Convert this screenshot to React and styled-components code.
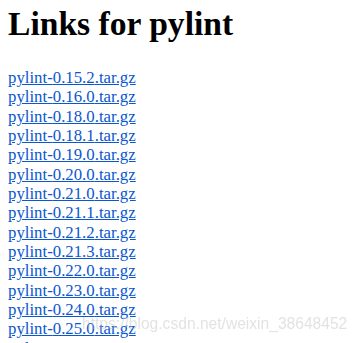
import React from 'react'
import styled, { createGlobalStyle } from 'styled-components'

const GlobalStyle = createGlobalStyle`
	body {
		margin: 5px 8px 8px;
		font-family: "Liberation Serif", "Times New Roman", serif;
		font-size: 16.8px;
		background: #fff;
		color: #000;
	}
`

const Title = styled.h1`
	font-size: 2em;
	font-weight: bold;
	margin: 0 0 25px;
`

const LinkList = styled.div`
	line-height: 19.35px;
`

const FileLink = styled.a`
	color: #0b57d0;
	text-decoration: underline;
`

const Watermark = styled.div`
	position: fixed;
	left: 82px;
	top: 315px;
	font-family: "Liberation Sans", Arial, sans-serif;
	font-size: 15.6px;
	color: rgba(190, 190, 190, 0.45);
	pointer-events: none;
	white-space: nowrap;
`

const versions = [
	'0.15.2', '0.16.0', '0.18.0', '0.18.1', '0.19.0', '0.20.0', '0.21.0',
	'0.21.1', '0.21.2', '0.21.3', '0.22.0', '0.23.0', '0.24.0', '0.25.0', '1.0.0',
]

const App = () => (
	<>
		<GlobalStyle/>
		<Title>Links for pylint</Title>
		<LinkList>
			{versions.map(v => (
				<React.Fragment key={v}>
					<FileLink href={`#pylint-${v}`}>pylint-{v}.tar.gz</FileLink><br/>
				</React.Fragment>
			))}
		</LinkList>
		<Watermark>https://blog.csdn.net/weixin_38648452</Watermark>
	</>
)

export default App
